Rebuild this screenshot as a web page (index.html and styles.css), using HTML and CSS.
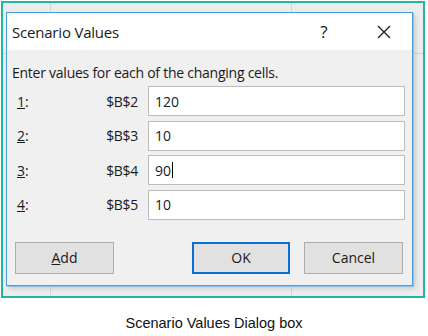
FILE: index.html
```html
<!DOCTYPE html>
<html lang="en">
<head>
<meta charset="utf-8">
<title>Scenario Values Dialog box</title>
<link rel="stylesheet" href="styles.css">
</head>
<body>

<div class="shot">
  <div class="dialog">
    <div class="titlebar">
      <span class="title">Scenario Values</span>
      <span class="help">?</span>
      <svg class="close" width="16" height="16" viewBox="0 0 16 16">
        <path d="M2 2 L14 14 M14 2 L2 14" stroke="#222" stroke-width="1.4" fill="none"/>
      </svg>
    </div>

    <div class="content">
      <div class="intro">Enter values for each of the changing cells.</div>

      <div class="rows">
        <div class="row">
          <span class="num"><u>1</u>:</span>
          <span class="cell">$B$2</span>
          <div class="field">120</div>
        </div>
        <div class="row">
          <span class="num"><u>2</u>:</span>
          <span class="cell">$B$3</span>
          <div class="field">10</div>
        </div>
        <div class="row">
          <span class="num"><u>3</u>:</span>
          <span class="cell">$B$4</span>
          <div class="field">90<span class="caret"></span></div>
        </div>
        <div class="row">
          <span class="num"><u>4</u>:</span>
          <span class="cell">$B$5</span>
          <div class="field">10</div>
        </div>
      </div>

      <div class="buttons">
        <div class="btn btn-add"><u>A</u>dd</div>
        <div class="btn btn-ok">OK</div>
        <div class="btn btn-cancel">Cancel</div>
      </div>
    </div>
  </div>
</div>

<div class="caption">Scenario Values Dialog box</div>

</body>
</html>
```

FILE: styles.css
```css
body            {margin:0; background:#fff; font-family:"Open Sans", "Noto Sans", sans-serif; color:#1a1a1a;}

/* screenshot frame with the excel grid behind the dialog */
.shot           {width:417px; height:284px; margin:1px 0 0 1px; padding:9px 0 0 3px;
                 border:2px solid #22b8a0;
                 background-color:#ececec;
                 background-image:linear-gradient(#d4d4d4, #d4d4d4), linear-gradient(#d4d4d4, #d4d4d4), linear-gradient(#d4d4d4, #d4d4d4);
                 background-size:1px 100%, 1px 100%, 100% 1px;
                 background-position:47px 0, 288px 0, 0 50px;
                 background-repeat:no-repeat;}

.dialog         {width:405px; height:272px; border:1px solid #4a9de0; background:#f0f0f0;
                 box-shadow:1px 1px 0 #8cc3ee, 3px 3px 4px rgba(0,0,0,0.12);
                 display:flex; flex-direction:column;}

.titlebar       {height:37px; background:#fff; display:flex; align-items:center; padding-left:5px;
                 border-bottom:1px dotted #e2e2e2;}
.title          {font-size:15px; flex:1; letter-spacing:-0.2px;}
.help           {font-size:17px; width:20px; text-align:center; margin-right:42px;}
.close          {margin-right:20px;}

.content        {padding:10px 0 0 5px; display:flex; flex-direction:column;}
.intro          {font-size:14px; height:24px; line-height:24px; letter-spacing:-0.25px;}

.rows           {display:flex; flex-direction:column; gap:4.5px; margin-top:1px;}
.row            {display:flex; align-items:center; height:30px; font-size:14px;}
.num            {width:26px; padding-left:5px;}
.cell           {width:95px; text-align:right; letter-spacing:-0.3px;}
.field          {width:249px; height:28px; margin-left:10px; border:1px solid #bcbcbc; background:#fff;
                 display:flex; align-items:center; padding-left:6px;}
.caret          {display:inline-block; width:1px; height:16px; background:#000; margin-left:1px;}

.buttons        {display:flex; margin-top:22px; padding-left:3px;}
.btn            {width:97px; height:30px; border:1px solid #adadad; background:#e1e1e1; font-size:14px;
                 display:flex; align-items:center; justify-content:center;}
.btn-ok         {margin-left:78px; width:94px; height:28px; border:2px solid #0a6fd1;}
.btn-cancel     {margin-left:14px;}

.caption        {font-family:"Liberation Sans", Arial, sans-serif; font-size:14.5px; color:#111;
                 text-align:center; margin-top:17px; width:428px;}
```
